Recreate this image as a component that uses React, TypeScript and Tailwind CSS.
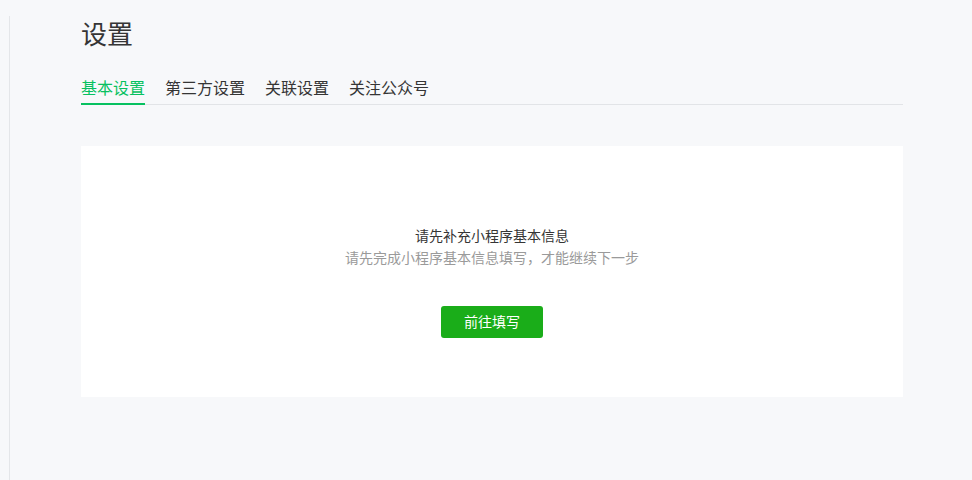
import React, { FC } from 'react';

const tabs = ['基本设置', '第三方设置', '关联设置', '关注公众号'];

const App: FC = (): JSX.Element => {
  return (
    <div
      className="min-h-[480px] bg-[#f7f8fa] pt-4 pl-[9px]"
      style={{ fontFamily: '"Liberation Sans", "Noto Sans CJK SC", sans-serif' }}
    >
      <div className="min-h-[464px] border-l border-[#e4e6e9] pl-[71px] pr-[69px]">
        <h1 className="text-[26px] leading-[36px] text-[#353535] pt-[1px]">设置</h1>
        {/* Tabs */}
        <div className="mt-[25px] flex gap-5 border-b border-[#e2e4e7]">
          {tabs.map((t, i) => (
            <div
              key={t}
              className={
                i === 0
                  ? 'pb-[3px] text-base leading-[22px] text-[#07c160] border-b-2 border-[#07c160] -mb-[1px]'
                  : 'pb-[3px] text-base leading-[22px] text-[#353535] border-b-2 border-transparent -mb-[1px]'
              }
            >
              {t}
            </div>
          ))}
        </div>
        {/* Card */}
        <section className="mt-[41px] h-[251px] bg-white flex flex-col items-center pt-[80px]">
          <p className="text-sm leading-5 text-[#353535]">请先补充小程序基本信息</p>
          <p className="mt-[2px] text-sm leading-5 text-[#9a9a9a]">请先完成小程序基本信息填写，才能继续下一步</p>
          <button className="mt-[38px] w-[102px] h-8 rounded-[3px] bg-[#1aad19] text-sm text-white">
            前往填写
          </button>
        </section>
      </div>
    </div>
  );
};

export default App;
